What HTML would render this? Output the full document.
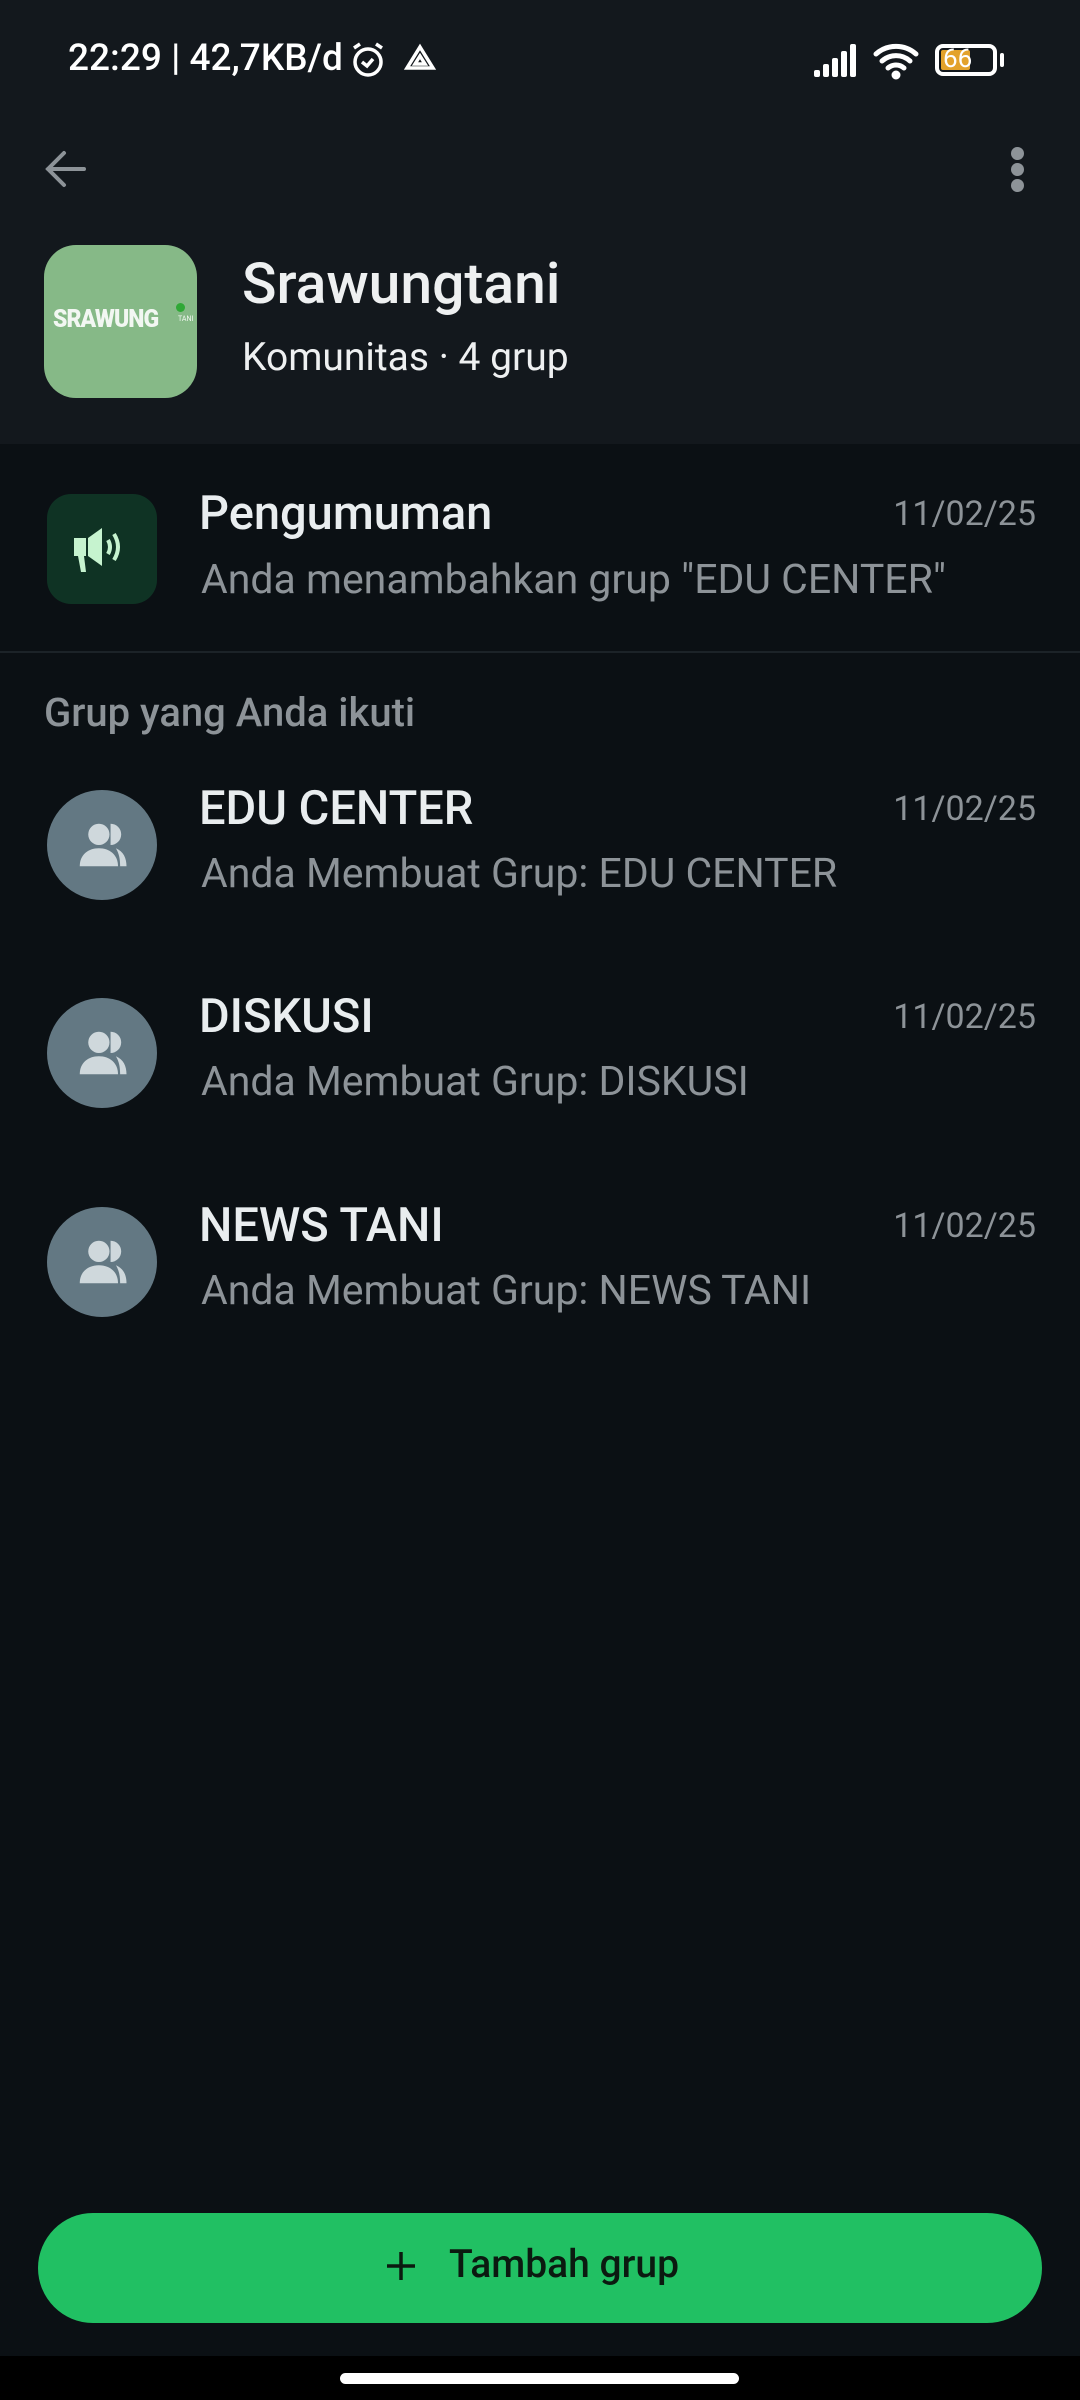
<!DOCTYPE html>
<html><head><meta charset="utf-8"><style>
*{margin:0;padding:0;box-sizing:border-box}
body{width:1080px;height:2400px;background:#0b1014;font-family:"Roboto","Liberation Sans",sans-serif;color:#e9edef;position:relative;overflow:hidden}
.a{position:absolute;white-space:nowrap}
.hdr{position:absolute;left:0;top:0;width:1080px;height:444px;background:#13181d}
.t{font-size:47px;font-weight:500;color:#e9edef}
.s{font-size:41px;color:#8d9398}
.d{font-size:34px;color:#8d9398;right:44px}
.av{position:absolute;left:47px;width:110px;height:110px;border-radius:50%;background:#637883}
</style></head><body>
<div class="hdr"></div>
<div class="a" style="left:68px;top:37px;font-size:37px;font-weight:500;color:#fff">22:29 | 42,7KB/d</div>
<svg class="a" style="left:348px;top:40px" width="40" height="40" viewBox="0 0 40 40" fill="none" stroke="#fff" stroke-width="3.5"><circle cx="20" cy="22" r="13"/><path d="M14 22l5 4 6-7M6 8l6-4M34 8l-6-4"/></svg>
<svg class="a" style="left:402px;top:42px" width="36" height="36" viewBox="0 0 36 36" fill="none" stroke="#fff" stroke-width="3.5"><path d="M18 5L31 26H5Z"/><path d="M18 14l5 8H13Z"/></svg>
<svg class="a" style="left:812px;top:42px" width="50" height="36" viewBox="0 0 50 36" fill="#fff"><rect x="2" y="28" width="6" height="7" rx="2"/><rect x="11" y="22" width="6" height="13" rx="2"/><rect x="20" y="16" width="6" height="19" rx="2"/><rect x="29" y="9" width="6" height="26" rx="2"/><rect x="38" y="2" width="6" height="33" rx="2"/></svg>
<svg class="a" style="left:872px;top:40px" width="50" height="40" viewBox="0 0 50 40" fill="none" stroke="#fff" stroke-width="5" stroke-linecap="round"><path d="M4 14a30 30 0 0 1 40 0M10 21a21 21 0 0 1 28 0M16 28a12 12 0 0 1 16 0"/><circle cx="24" cy="35" r="2" fill="#fff"/></svg>
<div class="a" style="left:935px;top:44px;width:62px;height:32px;border:4px solid #fff;border-radius:8px"></div>
<div class="a" style="left:941px;top:50px;width:29px;height:20px;background:#e3a22b;border-radius:2px"></div>
<div class="a" style="left:943px;top:44px;font-size:26px;color:#fff">66</div>
<div class="a" style="left:1000px;top:53px;width:4px;height:14px;background:#fff;border-radius:2px"></div>
<svg class="a" style="left:42px;top:145px" width="48" height="48" viewBox="0 0 48 48" fill="none" stroke="#8d9398" stroke-width="4" stroke-linecap="round"><path d="M42 24H6M22 8L6 24l16 16"/></svg>
<div class="a" style="left:1011px;top:147px;width:13px;height:13px;border-radius:50%;background:#8d9398"></div>
<div class="a" style="left:1011px;top:163px;width:13px;height:13px;border-radius:50%;background:#8d9398"></div>
<div class="a" style="left:1011px;top:179px;width:13px;height:13px;border-radius:50%;background:#8d9398"></div>
<div class="a" style="left:44px;top:245px;width:153px;height:153px;border-radius:32px;background:#86b987"></div>
<div class="a" style="left:53px;top:305px;font-size:25px;font-weight:900;color:#f2f7f2;letter-spacing:-1px;transform:scaleX(.92);transform-origin:left">SRAWUNG</div>
<div class="a" style="left:176px;top:303px;width:9px;height:9px;border-radius:50%;background:#2fa836"></div>
<div class="a" style="left:178px;top:315px;font-size:7px;color:#f2f7f2">TANI</div>
<div class="a" style="left:242px;top:250px;font-size:57px;font-weight:500;color:#eef0f1">Srawungtani</div>
<div class="a" style="left:242px;top:334px;font-size:39px;color:#eef0f1">Komunitas · 4 grup</div>

<div class="a" style="left:47px;top:494px;width:110px;height:110px;border-radius:24px;background:#0f3324"></div>
<svg class="a" style="left:68px;top:514px" width="70" height="70" viewBox="0 0 70 70" fill="#c6f3cf"><path d="M6 24h12v18H6z"/><path d="M20 24l14-10v38L20 42z"/><path d="M10 42h6l2 16h-5z"/><path d="M40 26q4 7 0 14" stroke="#c6f3cf" stroke-width="4" fill="none"/><path d="M46 20q8 13 0 26" stroke="#c6f3cf" stroke-width="4" fill="none"/></svg>
<div class="a t" style="left:199px;top:486px">Pengumuman</div>
<div class="a d" style="top:494px">11/02/25</div>
<div class="a s" style="left:201px;top:556px">Anda menambahkan grup "EDU CENTER"</div>
<div class="a" style="left:0;top:651px;width:1080px;height:2px;background:#1c2328"></div>
<div class="a" style="left:44px;top:689px;font-size:40px;font-weight:500;color:#8d9398">Grup yang Anda ikuti</div>

<svg width="0" height="0" style="position:absolute"><defs><g id="pp" fill="#cfd8dc"><circle cx="30" cy="18" r="10"/><path d="M12 48c0-11 8-17 18-17s18 6 18 17z"/><path d="M41 8a10 10 0 0 1 0 20z"/><path d="M46 31c7 3 10 9 10 17h-6c0-7-1-12-4-17z"/></g></defs></svg>

<div class="av" style="top:790px"></div>
<svg class="a" style="left:67px;top:815px" width="68" height="60" viewBox="0 0 64 56"><use href="#pp"/></svg>
<div class="a t" style="left:199px;top:781px">EDU CENTER</div>
<div class="a d" style="top:789px">11/02/25</div>
<div class="a s" style="left:201px;top:850px">Anda Membuat Grup: EDU CENTER</div>

<div class="av" style="top:998px"></div>
<svg class="a" style="left:67px;top:1023px" width="68" height="60" viewBox="0 0 64 56"><use href="#pp"/></svg>
<div class="a t" style="left:199px;top:989px">DISKUSI</div>
<div class="a d" style="top:997px">11/02/25</div>
<div class="a s" style="left:201px;top:1058px">Anda Membuat Grup: DISKUSI</div>

<div class="av" style="top:1207px"></div>
<svg class="a" style="left:67px;top:1232px" width="68" height="60" viewBox="0 0 64 56"><use href="#pp"/></svg>
<div class="a t" style="left:199px;top:1198px">NEWS TANI</div>
<div class="a d" style="top:1206px">11/02/25</div>
<div class="a s" style="left:201px;top:1267px">Anda Membuat Grup: NEWS TANI</div>

<div class="a" style="left:38px;top:2213px;width:1004px;height:110px;border-radius:55px;background:#21c063"></div>
<svg class="a" style="left:386px;top:2251px" width="30" height="30" viewBox="0 0 30 30" stroke="#0b1a10" stroke-width="3.5"><path d="M15 1v28M1 15h28"/></svg>
<div class="a" style="left:449px;top:2241px;font-size:39px;font-weight:500;color:#0b1a10">Tambah grup</div>
<div class="a" style="left:0;top:2356px;width:1080px;height:44px;background:#000"></div>
<div class="a" style="left:340px;top:2373px;width:399px;height:11px;border-radius:6px;background:#fff"></div>
</body></html>
